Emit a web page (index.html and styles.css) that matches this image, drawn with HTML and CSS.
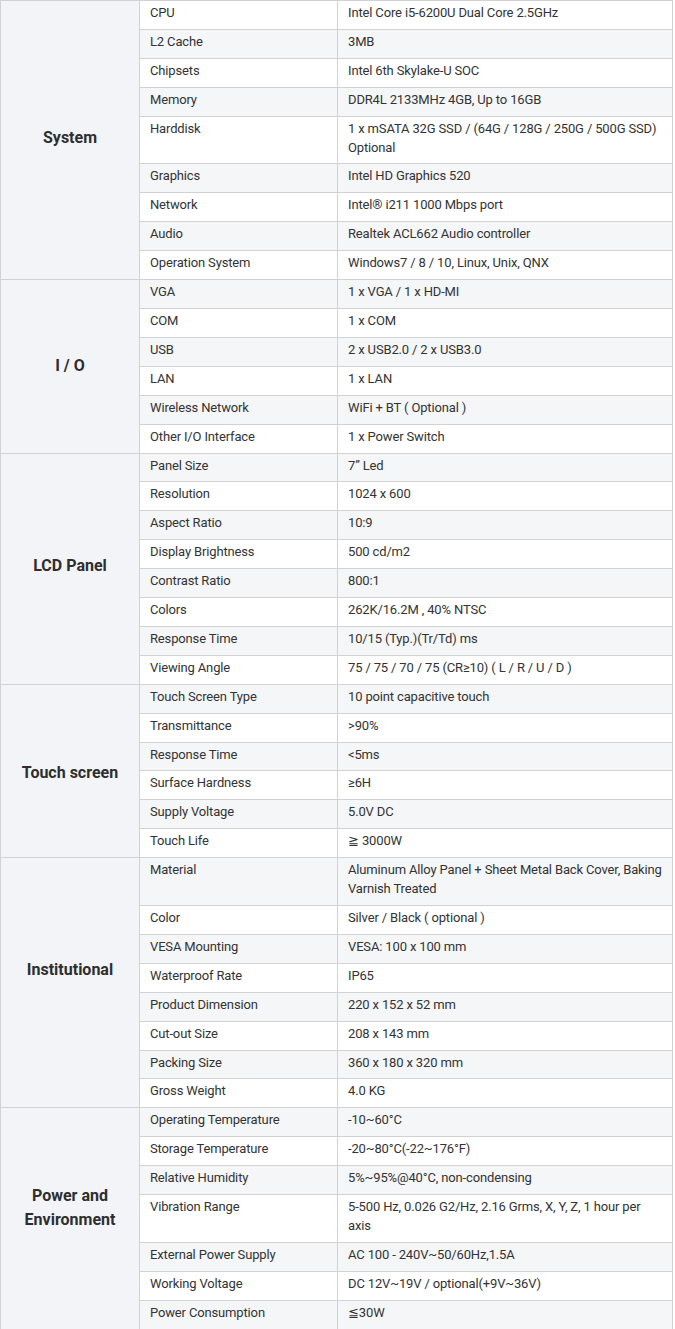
FILE: index.html
```html
<!DOCTYPE html>
<html>
<head>
<meta charset="utf-8">
<link rel="stylesheet" href="styles.css">
</head>
<body>
<table class="spec">
<colgroup><col class="c1"><col class="c2"><col class="c3"></colgroup>
<tbody>
<tr><th rowspan="9" class="group up-small">System</th><td>CPU</td><td>Intel Core i5-6200U Dual Core 2.5GHz</td></tr>
<tr><td>L2 Cache</td><td>3MB</td></tr>
<tr><td>Chipsets</td><td>Intel 6th Skylake-U SOC</td></tr>
<tr><td>Memory</td><td>DDR4L 2133MHz 4GB, Up to 16GB</td></tr>
<tr><td>Harddisk</td><td>1 x mSATA 32G SSD / (64G / 128G / 250G / 500G SSD) Optional</td></tr>
<tr><td>Graphics</td><td>Intel HD Graphics 520</td></tr>
<tr><td>Network</td><td>Intel® i211 1000 Mbps port</td></tr>
<tr><td>Audio</td><td>Realtek ACL662 Audio controller</td></tr>
<tr><td>Operation System</td><td>Windows7 / 8 / 10, Linux, Unix, QNX</td></tr>

<tr><th rowspan="6" class="group">I / O</th><td>VGA</td><td>1 x VGA / 1 x HD-MI</td></tr>
<tr><td>COM</td><td>1 x COM</td></tr>
<tr><td>USB</td><td>2 x USB2.0 / 2 x USB3.0</td></tr>
<tr><td>LAN</td><td>1 x LAN</td></tr>
<tr><td>Wireless Network</td><td>WiFi + BT ( Optional )</td></tr>
<tr><td>Other I/O Interface</td><td>1 x Power Switch</td></tr>

<tr><th rowspan="8" class="group up-small">LCD Panel</th><td>Panel Size</td><td>7” Led</td></tr>
<tr><td>Resolution</td><td>1024 x 600</td></tr>
<tr><td>Aspect Ratio</td><td>10:9</td></tr>
<tr><td>Display Brightness</td><td>500 cd/m2</td></tr>
<tr><td>Contrast Ratio</td><td>800:1</td></tr>
<tr><td>Colors</td><td>262K/16.2M , 40% NTSC</td></tr>
<tr><td>Response Time</td><td>10/15 (Typ.)(Tr/Td) ms</td></tr>
<tr><td>Viewing Angle</td><td>75 / 75 / 70 / 75 (CR≥10) ( L / R / U / D )</td></tr>

<tr><th rowspan="6" class="group down-small">Touch screen</th><td>Touch Screen Type</td><td>10 point capacitive touch</td></tr>
<tr><td>Transmittance</td><td>&gt;90%</td></tr>
<tr><td>Response Time</td><td>&lt;5ms</td></tr>
<tr><td>Surface Hardness</td><td>≥6H</td></tr>
<tr><td>Supply Voltage</td><td>5.0V DC</td></tr>
<tr><td>Touch Life</td><td>≧ 3000W</td></tr>

<tr><th rowspan="8" class="group up-large">Institutional</th><td>Material</td><td>Aluminum Alloy Panel + Sheet Metal Back Cover, Baking Varnish Treated</td></tr>
<tr><td>Color</td><td>Silver / Black ( optional )</td></tr>
<tr><td>VESA Mounting</td><td>VESA: 100 x 100 mm</td></tr>
<tr><td>Waterproof Rate</td><td>IP65</td></tr>
<tr><td>Product Dimension</td><td>220 x 152 x 52 mm</td></tr>
<tr><td>Cut-out Size</td><td>208 x 143 mm</td></tr>
<tr><td>Packing Size</td><td>360 x 180 x 320 mm</td></tr>
<tr><td>Gross Weight</td><td>4.0 KG</td></tr>

<tr><th rowspan="7" class="group up-medium">Power and Environment</th><td>Operating Temperature</td><td>-10~60°C</td></tr>
<tr><td>Storage Temperature</td><td>-20~80°C(-22~176°F)</td></tr>
<tr><td>Relative Humidity</td><td>5%~95%@40°C, non-condensing</td></tr>
<tr><td>Vibration Range</td><td>5-500 Hz, 0.026 G2/Hz, 2.16 Grms, X, Y, Z, 1 hour per axis</td></tr>
<tr><td>External Power Supply</td><td>AC 100 - 240V~50/60Hz,1.5A</td></tr>
<tr><td>Working Voltage</td><td>DC 12V~19V / optional(+9V~36V)</td></tr>
<tr><td>Power Consumption</td><td>≦30W</td></tr>
</tbody>
</table>
</body>
</html>
```

FILE: styles.css
```css
html, body {
  margin: 0;
  padding: 0;
  background: #ffffff;
}

.spec {
  width: 673px;
  border-collapse: collapse;
  table-layout: fixed;
  font-family: Roboto, "Liberation Sans", Arial, sans-serif;
  font-size: 13px;
  letter-spacing: -0.15px;
  line-height: 18.9px;
  color: #333333;
}

.c1 { width: 139px; }
.c2 { width: 198px; }

.spec td,
.spec th {
  border: 1px solid #d2d2d2;
  text-align: left;
  vertical-align: top;
  padding: 3px 8px 6px 10px;
}

.spec tr:nth-child(even) td {
  background: #f5f6f8;
}

.spec th.group {
  background: #f3f4f7;
  text-align: center;
  vertical-align: middle;
  font-size: 16px;
  letter-spacing: 0;
  font-weight: 700;
  line-height: 24px;
  color: #2e2e2e;
  padding: 0 12px;
}

.spec th.group.up-small { padding-bottom: 5px; }
.spec th.group.down-small { padding-top: 4px; }
.spec th.group.up-medium { padding-bottom: 20px; }
.spec th.group.up-large { padding-bottom: 26px; }
```
